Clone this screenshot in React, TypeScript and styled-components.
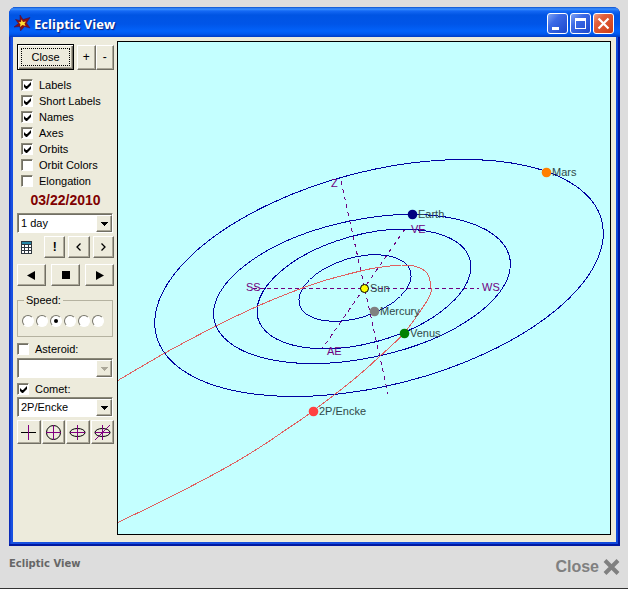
import React from 'react';
import styled, { createGlobalStyle, css } from 'styled-components';

const GlobalStyle = createGlobalStyle`
  * { box-sizing: border-box; }
  body { margin: 0; background: #dddddd; }
`;

const uiFont = '"Liberation Sans", Arial, sans-serif';

const Page = styled.div`
  min-height: 100vh;
  display: flex;
  flex-direction: column;
  padding: 7px 8px 0 9px;
  background: #dddddd;
  border-bottom: 1px solid #333333;
  font-family: ${uiFont};
`;

const Window = styled.section`
  background: linear-gradient(90deg, #0a2fc4 0, #0a2fc4 1px, #1850e0 2px, #0f48dc 100%);
  border-radius: 7px 7px 0 0;
  padding: 0 4px 4px;
  box-shadow: inset -2px -2px 0 #0018a0, inset 1px 0 0 #0a2ab8;
`;

const TitleBar = styled.header`
  display: flex;
  align-items: center;
  gap: 3px;
  height: 30px;
  margin: 0 -4px;
  padding: 3px 6px 0 5px;
  border-radius: 7px 7px 0 0;
  background: linear-gradient(180deg, #0a50cc 0, #3a90ff 2px, #1468f4 4px, #0054e3 8px, #0055e8 17px, #0262fa 24px, #0058ee 27px, #003cc4 30px);
`;

const Title = styled.h1`
  flex: 1;
  margin: 0;
  color: #ffffff;
  font: 700 13px/18px "Open Sans", "Noto Sans", sans-serif;
  text-shadow: 1px 1px 1px #0a1f80;
`;

const TitleIcon = styled.svg`
  width: 17px;
  height: 17px;
`;

const TitleActions = styled.div`
  display: flex;
  gap: 2px;
`;

const TitleButton = styled.button<{ $danger?: boolean }>`
  width: 21px;
  height: 21px;
  padding: 0;
  display: grid;
  place-items: center;
  border: 1px solid #ffffff;
  border-radius: 3px;
  background: ${p => p.$danger
    ? 'linear-gradient(135deg, #f0a088 0, #e2603c 30%, #cc3c14 100%)'
    : 'linear-gradient(135deg, #7ea4f4 0, #3c6ae6 35%, #1c48cc 100%)'};
`;

const Client = styled.div`
  display: flex;
  align-items: flex-start;
  padding: 4px 5px 7px 4px;
  background: #edebdc;
`;

const Sidebar = styled.aside`
  flex: 0 0 100px;
  padding: 3px 3px 0 0;
  display: flex;
  flex-direction: column;
  font-size: 11px;
  line-height: 16px;
  color: #000000;
`;

const Chart = styled.main`
  flex: 1;
  min-width: 0;
  border: 1px solid #000000;
  background: #c4ffff;
`;

const Plot = styled.svg`
  display: block;
  width: 100%;
  height: auto;
  font: 11px ${uiFont};
`;

const Row = styled.div<{ $gap?: number; $mt?: number }>`
  display: flex;
  align-items: center;
  gap: ${p => p.$gap ?? 0}px;
  margin-top: ${p => p.$mt ?? 0}px;
`;

const raised = css`
  border: 1px solid;
  border-color: #ffffff #716f64 #716f64 #ffffff;
  box-shadow: inset -1px -1px 0 #aca899;
`;

const sunken = css`
  border: 1px solid;
  border-color: #8a8878 #ffffff #ffffff #8a8878;
  box-shadow: inset 1px 1px 0 #716f64;
`;

const ToolButton = styled.button<{ $h?: number; $bold?: boolean }>`
  ${raised}
  flex: 1;
  height: ${p => p.$h ?? 22}px;
  padding: 0;
  display: grid;
  place-items: center;
  background: #edebdc;
  color: #000000;
  font: ${p => (p.$bold ? 700 : 400)} 12px/14px ${uiFont};
`;

const CloseButton = styled(ToolButton)`
  flex: 0 0 57px;
  margin-right: 3px;
  border: 1px solid #000000;
  box-shadow: inset 1px 1px 0 #ffffff, inset -1px -1px 0 #716f64, inset -2px -2px 0 #aca899;
  font-size: 11px;
  outline: 1px dotted #000000;
  outline-offset: -5px;
`;

const IconButton = styled.button`
  flex: 0 0 24px;
  padding: 0 0 0 4px;
  border: 0;
  background: none;
  display: flex;
`;

const Glyph = styled.svg`
  display: block;
`;

const Checks = styled.div`
  margin: 7px 0 0 4px;
`;

const CheckLabel = styled.label<{ $mt?: number }>`
  display: flex;
  align-items: center;
  gap: 6px;
  height: 16px;
  margin-top: ${p => p.$mt ?? 0}px;
  white-space: nowrap;
`;

const Check = styled.input.attrs({ type: 'checkbox' })`
  ${sunken}
  appearance: none;
  width: 12px;
  height: 12px;
  margin: 0;
  padding: 2px;
  background: #ffffff;
  &:checked::after {
    content: '';
    display: block;
    width: 7px;
    height: 7px;
    background: #000000;
    clip-path: polygon(0 2px, 2px 4px, 3px 4px, 7px 0, 7px 3px, 3px 7px, 2px 7px, 0 5px);
  }
`;

const DateText = styled.time`
  margin-top: 3px;
  text-align: center;
  color: #800000;
  font: 700 14px/16px ${uiFont};
`;

const SelectBox = styled.div<{ $mt?: number }>`
  position: relative;
  margin-top: ${p => p.$mt ?? 0}px;
  margin-right: 1px;
`;

const Select = styled.select`
  ${sunken}
  appearance: none;
  display: block;
  width: 100%;
  height: 20px;
  padding: 0 18px 0 3px;
  border-radius: 0;
  background: #ffffff;
  color: #000000;
  font: 11px/16px ${uiFont};
  opacity: 1;
`;

const DropMark = styled.span<{ $off?: boolean }>`
  ${raised}
  position: absolute;
  top: 2px;
  right: 1px;
  width: 16px;
  height: 17px;
  display: grid;
  place-items: center;
  background: #edebdc;
  color: ${p => (p.$off ? '#aca899' : '#000000')};
  pointer-events: none;
`;

const Group = styled.fieldset`
  min-width: 0;
  height: 44px;
  margin: 7px 1px 0 0;
  padding: 8px 0 0 4px;
  border: 1px solid #b5b2a0;
  display: flex;
`;

const Legend = styled.legend`
  margin-left: 2px;
  padding: 0 2px;
  line-height: 14px;
`;

const Radios = styled.div`
  display: flex;
  gap: 2px;
`;

const Radio = styled.input.attrs({ type: 'radio' })`
  appearance: none;
  width: 12px;
  height: 12px;
  margin: 0;
  border: 1px solid;
  border-color: #77756a #ffffff #ffffff #77756a;
  border-radius: 50%;
  background: #ffffff;
  display: grid;
  place-items: center;
  &:checked::after {
    content: '';
    width: 4px;
    height: 4px;
    border-radius: 50%;
    background: #000000;
  }
`;

const Footer = styled.footer`
  flex: 1;
  display: flex;
  justify-content: space-between;
  align-items: flex-start;
  padding-top: 10px;
  color: #666666;
`;

const Caption = styled.p`
  margin: 0;
  font: 700 10px/15px "DejaVu Sans", Verdana, sans-serif;
`;

const CloseLink = styled.a`
  display: flex;
  align-items: center;
  gap: 4px;
  color: #808080;
  text-decoration: none;
  font: 700 16px/22px ${uiFont};
`;

const Orbit = styled.ellipse`
  fill: none;
  stroke: #0000a0;
  shape-rendering: crispEdges;
`;

const Axis = styled.line<{ $slanted?: boolean }>`
  stroke: #700080;
  stroke-dasharray: ${p => (p.$slanted ? '4 4' : '4 3')};
  shape-rendering: crispEdges;
`;

const CometPath = styled.polyline`
  fill: none;
  stroke: #e06060;
  shape-rendering: crispEdges;
`;

const BodyName = styled.text`
  fill: #304848;
`;

const AxisName = styled.text`
  fill: #700080;
`;

type Point = [number, number];

// Densely samples a Catmull-Rom spline running through the given points.
function smooth(points: Point[]): string {
  const out: string[] = [];
  for (let i = 0; i < points.length - 1; i++) {
    const p0 = points[Math.max(i - 1, 0)];
    const p1 = points[i];
    const p2 = points[i + 1];
    const p3 = points[Math.min(i + 2, points.length - 1)];
    for (let s = 0; s < 8; s++) {
      const t = s / 8;
      const at = (k: 0 | 1) =>
        0.5 * (2 * p1[k] + (p2[k] - p0[k]) * t + (2 * p0[k] - 5 * p1[k] + 4 * p2[k] - p3[k]) * t * t
          + (3 * p1[k] - p0[k] - 3 * p2[k] + p3[k]) * t * t * t);
      out.push(`${at(0).toFixed(1)},${at(1).toFixed(1)}`);
    }
  }
  out.push(points[points.length - 1].join(','));
  return out.join(' ');
}

const comet: Point[] = [
  [117, 381], [165, 353], [216, 326], [258, 306], [292, 292], [323, 281], [365, 270], [390, 266],
  [407, 265], [417, 267], [425, 271], [429, 277], [431, 288], [430, 295], [423, 307], [404, 333],
  [378, 358], [353, 380], [313, 411], [290, 427], [254, 451], [218, 472], [170, 497], [117, 523],
];

const orbits = [
  { cx: 379, cy: 278, rx: 230, ry: 107, tilt: -14.5 },
  { cx: 362, cy: 289, rx: 151, ry: 69, tilt: -12 },
  { cx: 364, cy: 289, rx: 110, ry: 54, tilt: -15.5 },
  { cx: 355, cy: 288, rx: 58, ry: 30, tilt: -17 },
];

const bodies = [
  { name: 'Sun', x: 364, y: 288, color: '#ffff00', ring: true },
  { name: 'Mercury', x: 374, y: 311, color: '#808080' },
  { name: 'Venus', x: 404, y: 333, color: '#008000' },
  { name: 'Earth', x: 412, y: 214, color: '#000080' },
  { name: 'Mars', x: 546, y: 172, color: '#ff8000' },
  { name: '2P/Encke', x: 313, y: 411, color: '#ff4040' },
];

const axisNames = [
  { name: 'Z', x: 331, y: 187 },
  { name: 'VE', x: 411, y: 233 },
  { name: 'AE', x: 327, y: 355 },
  { name: 'SS', x: 246, y: 291 },
  { name: 'WS', x: 482, y: 291 },
];

const options = [
  ['Labels', true], ['Short Labels', true], ['Names', true], ['Axes', true],
  ['Orbits', true], ['Orbit Colors', false], ['Elongation', false],
] as const;

function Dropdown({ label, value, mt, off }: { label: string; value: string; mt?: number; off?: boolean }) {
  return (
    <SelectBox $mt={mt}>
      <Select aria-label={label} defaultValue={value} disabled={off}>
        <option>{value}</option>
      </Select>
      <DropMark $off={off}>
        <Glyph width="7" height="4" viewBox="0 0 7 4" shapeRendering="crispEdges">
          <path d="M0 0H7L3.5 4Z" fill="currentColor" />
        </Glyph>
      </DropMark>
    </SelectBox>
  );
}

function ViewIcon({ kind }: { kind: 'cross' | 'circle' | 'ellipse' | 'tilted' }) {
  return (
    <Glyph width="17" height="17" viewBox="0 0 17 17" fill="none">
      {kind === 'circle' && <circle cx="8.5" cy="8.5" r="7" stroke="#000" />}
      {(kind === 'ellipse' || kind === 'tilted') && <ellipse cx="8.5" cy="8.5" rx="7.5" ry="4" stroke="#000" />}
      <path d="M1 8.5H16" stroke={kind === 'cross' ? '#000' : '#800080'} />
      <path d="M8.5 1V16" stroke="#800080" />
      {kind === 'tilted' && <path d="M1 16L16 1" stroke="#800080" />}
    </Glyph>
  );
}

export default function App() {
  return (
    <Page>
      <GlobalStyle />
      <Window>
        <TitleBar>
          <TitleIcon viewBox="0 0 17 17">
            <path d="M6 0L9 4.500L16 2.500L12.500 8L16 13L10.500 11.500L6.500 16L6 11.500L0 12L4.500 8.500L1.500 4.500L6 5.500Z" fill="#8c1010" stroke="#3c1050" strokeWidth="0.6" />
            <path d="M7.500 4.500L9 7L12 6.500L10.500 8.500L11.500 11L8.500 10L6 12L6.500 9L4.500 7.500L7 7Z" fill="#ffe030" />
          </TitleIcon>
          <Title>Ecliptic View</Title>
          <TitleActions>
            <TitleButton aria-label="Minimize">
              <Glyph width="19" height="19" viewBox="0 0 19 19"><path d="M4 13H11V16H4Z" fill="#fff" /></Glyph>
            </TitleButton>
            <TitleButton aria-label="Maximize">
              <Glyph width="19" height="19" viewBox="0 0 19 19"><path d="M4 4H15V15H4ZM5 7V14H14V7Z" fill="#fff" fillRule="evenodd" /></Glyph>
            </TitleButton>
            <TitleButton aria-label="Close window" $danger>
              <Glyph width="19" height="19" viewBox="0 0 19 19"><path d="M4.500 4.500L14.500 14.500M14.500 4.500L4.500 14.500" stroke="#fff" strokeWidth="2.200" /></Glyph>
            </TitleButton>
          </TitleActions>
        </TitleBar>
        <Client>
          <Sidebar>
            <Row>
              <CloseButton $h={26}>Close</CloseButton>
              <ToolButton $h={25}>+</ToolButton>
              <ToolButton $h={25}>-</ToolButton>
            </Row>
            <Checks>
              {options.map(([name, on]) => (
                <CheckLabel key={name}><Check defaultChecked={on} />{name}</CheckLabel>
              ))}
            </Checks>
            <DateText dateTime="2010-03-22">03/22/2010</DateText>
            <Dropdown label="Time step" value="1 day" mt={5} />
            <Row $gap={3} $mt={3}>
              <IconButton aria-label="Calendar">
                <Glyph width="11" height="13" viewBox="0 0 11 13" shapeRendering="crispEdges">
                  <path d="M0 0H11V13H0Z" fill="#303840" />
                  <path d="M1 1H10V3H1Z" fill="#2888a8" />
                  <path d="M1 4H3V6H1ZM4 4H7V6H4ZM8 4H10V6H8ZM1 7H3V9H1ZM4 7H7V9H4ZM8 7H10V9H8ZM1 10H3V12H1ZM4 10H7V12H4ZM8 10H10V12H8Z" fill="#fff" />
                </Glyph>
              </IconButton>
              <ToolButton $bold aria-label="Now">!</ToolButton>
              <ToolButton aria-label="Step back">
                <Glyph width="5" height="8" viewBox="0 0 5 8" fill="none"><path d="M4.500 0.500L1 4L4.500 7.500" stroke="#000" strokeWidth="1.300" /></Glyph>
              </ToolButton>
              <ToolButton aria-label="Step forward">
                <Glyph width="5" height="8" viewBox="0 0 5 8" fill="none"><path d="M0.500 0.500L4 4L0.500 7.500" stroke="#000" strokeWidth="1.300" /></Glyph>
              </ToolButton>
            </Row>
            <Row $gap={5} $mt={6}>
              <ToolButton aria-label="Play backward">
                <Glyph width="9" height="9" viewBox="0 0 9 9"><path d="M0 4.500L8 0V9Z" /></Glyph>
              </ToolButton>
              <ToolButton aria-label="Stop">
                <Glyph width="8" height="8" viewBox="0 0 8 8"><path d="M0 0H8V8H0Z" /></Glyph>
              </ToolButton>
              <ToolButton aria-label="Play forward">
                <Glyph width="9" height="9" viewBox="0 0 9 9"><path d="M9 4.500L1 0V9Z" /></Glyph>
              </ToolButton>
            </Row>
            <Group>
              <Legend>Speed:</Legend>
              <Radios>
                {[1, 2, 3, 4, 5, 6].map(n => (
                  <Radio key={n} name="speed" aria-label={`Speed ${n}`} defaultChecked={n === 3} />
                ))}
              </Radios>
            </Group>
            <CheckLabel $mt={4}><Check />Asteroid:</CheckLabel>
            <Dropdown label="Asteroid" value="" mt={1} off />
            <CheckLabel $mt={3}><Check defaultChecked />Comet:</CheckLabel>
            <Dropdown label="Comet" value="2P/Encke" />
            <Row $gap={1} $mt={3}>
              <ToolButton $h={24} aria-label="Side view"><ViewIcon kind="cross" /></ToolButton>
              <ToolButton $h={24} aria-label="Top view"><ViewIcon kind="circle" /></ToolButton>
              <ToolButton $h={24} aria-label="Oblique view"><ViewIcon kind="ellipse" /></ToolButton>
              <ToolButton $h={24} aria-label="Tilted view"><ViewIcon kind="tilted" /></ToolButton>
            </Row>
          </Sidebar>
          <Chart>
            <Plot viewBox="118 42 492 492" role="img" aria-label="Planet orbits">
              <Axis x1="253" y1="288.5" x2="479" y2="288.5" />
              <Axis $slanted x1="341" y1="181" x2="388" y2="394" />
              <Axis $slanted x1="405" y1="229" x2="322" y2="349" />
              {orbits.map(o => (
                <Orbit key={o.rx} cx={o.cx} cy={o.cy} rx={o.rx} ry={o.ry} transform={`rotate(${o.tilt} ${o.cx} ${o.cy})`} />
              ))}
              <CometPath points={smooth(comet)} />
              {axisNames.map(a => <AxisName key={a.name} x={a.x} y={a.y}>{a.name}</AxisName>)}
              {bodies.map(b => (
                <g key={b.name}>
                  <circle cx={b.x + 0.5} cy={b.y + 0.5} r={b.ring ? 4 : 4.800} fill={b.color} stroke={b.ring ? '#000' : 'none'} />
                  <BodyName x={b.x + 6} y={b.y + 4}>{b.name}</BodyName>
                </g>
              ))}
            </Plot>
          </Chart>
        </Client>
      </Window>
      <Footer>
        <Caption>Ecliptic View</Caption>
        <CloseLink href="#">
          Close
          <Glyph width="17" height="18" viewBox="0 0 17 18"><path d="M2 2.500L15 15.500M15 2.500L2 15.500" stroke="#808080" strokeWidth="4" /></Glyph>
        </CloseLink>
      </Footer>
    </Page>
  );
}
